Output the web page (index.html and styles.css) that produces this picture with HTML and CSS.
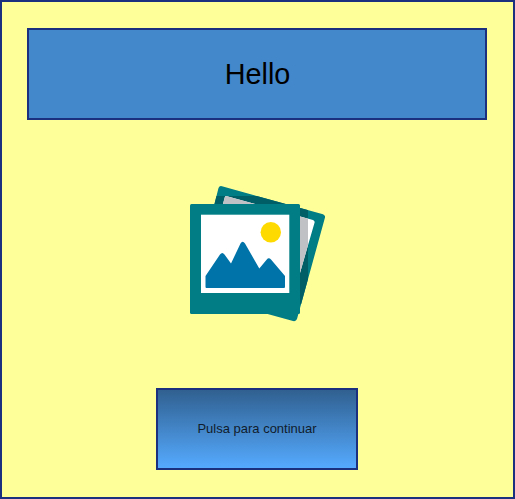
FILE: index.html
```html
<!DOCTYPE html>
<html lang="es">
<head>
<meta charset="utf-8">
<title>Hello</title>
<link rel="stylesheet" href="styles.css">
</head>
<body>
<main class="screen">
  <header class="banner">Hello</header>
  <div class="picture">
    <svg width="135" height="136" viewBox="190 186 135 136" aria-hidden="true">
      <defs>
        <clipPath id="rear"><path d="M222 186.300 L323 214.300 Q325.500 215.500 325 217.500 L297 319 Q296 321.700 293 321 L192 293 L218.500 188 Q219.500 185.500 222 186.300Z"/></clipPath>
      </defs>
      <g clip-path="url(#rear)">
        <rect x="190" y="186" width="135" height="136" fill="#007d85"/>
        <path d="M190 196 H308 V304 H190Z" fill="#005e66"/>
        <path d="M227 196.200 L313 220 Q315 221 314.600 222.500 L300 273 L208 260 L224.700 197.500 Q225.300 195.700 227 196.200Z" fill="#fff"/>
        <path d="M227 196.200 L308 218.700 V245 L300 273 L208 260 L224.700 197.500 Q225.300 195.700 227 196.200Z" fill="#bfc1c5"/>
      </g>
      <rect x="190" y="204" width="110" height="110" rx="1.500" fill="#007d85"/>
      <rect x="201" y="214.700" width="88.300" height="78.300" fill="#fff"/>
      <circle cx="270.800" cy="232.300" r="10.200" fill="#ffda00"/>
      <path d="M205.500 276 L220 254.500 Q222.300 251.500 224.500 254.500 L231 263.500 L240.500 243.500 Q242.500 240 245 243.500 L259.300 268.500 L266.800 259.500 Q268.700 257 271 259.500 L285 276 V287 Q285 288 284 288 H206.500 Q205.500 288 205.500 287Z" fill="#0073a8"/>
    </svg>
  </div>
  <button class="continue" type="button">Pulsa para continuar</button>
</main>
</body>
</html>
```
FILE: styles.css
```css
body { margin: 0; }
.screen {
  box-sizing: border-box;
  height: 499px;
  padding: 26px 26px 27px 25px;
  border: 2px solid #1c3080;
  background: #ffff99;
  display: flex;
  flex-direction: column;
  align-items: center;
  justify-content: space-between;
  font-family: "Liberation Sans", Arial, sans-serif;
}
.banner {
  box-sizing: border-box;
  width: 100%;
  height: 92px;
  padding-left: 1px;
  border: 2px solid #1c3080;
  background: #4488cc;
  font-size: 28.8px;
  line-height: 88px;
  text-align: center;
}
.picture svg { display: block; }
.continue {
  box-sizing: border-box;
  width: 202px;
  height: 82px;
  padding: 0 0 2px;
  border: 2px solid #1c3080;
  background: linear-gradient(#306090, #55aaff);
  font: 13px "Liberation Sans", Arial, sans-serif;
  color: #101c2c;
}
```
